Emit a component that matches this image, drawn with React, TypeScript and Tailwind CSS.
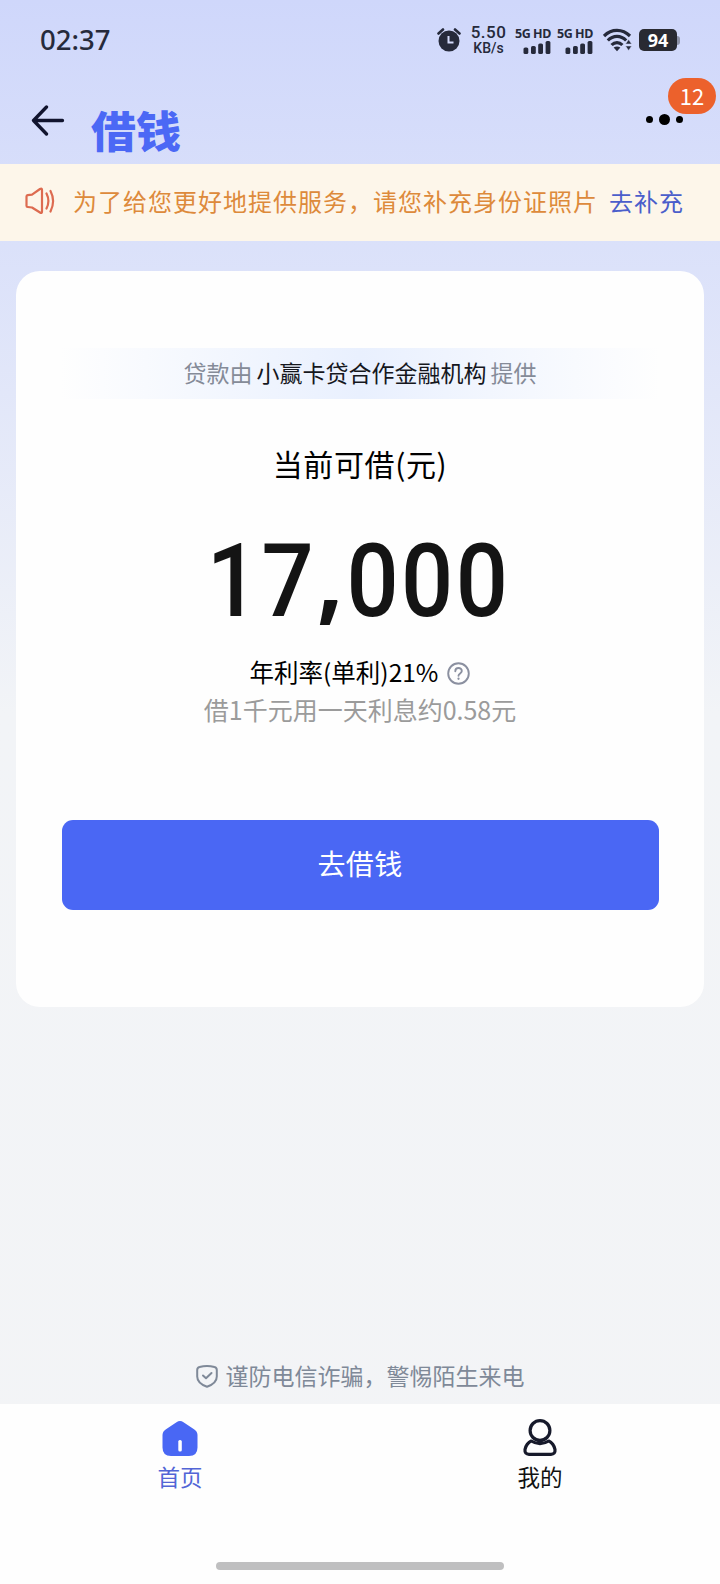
/**
 * Loan home screen
 * ─────────────────
 * Status bar, title bar, notice strip, quota card and bottom tabs.
 */
import type { ReactNode } from 'react';

const INK = '#262a3b';

function AlarmIcon() {
  return (
    <svg width="24" height="26" viewBox="0 0 24 26" fill="none">
      <circle cx="12" cy="14" r="10.5" fill={INK} />
      <path d="M1.5 6.5 6 2.5M22.5 6.5 18 2.5" stroke={INK} strokeWidth="2.6" strokeLinecap="round" />
      <path d="M11.5 9v6.5h5" stroke="#d3dafb" strokeWidth="2" />
    </svg>
  );
}

function Signal() {
  return (
    <div className="flex w-[36px] flex-col items-end">
      <div className="flex w-full justify-between text-[12.5px] leading-[13px] font-bold tracking-[-0.4px]">
        <span>5G</span>
        <span>HD</span>
      </div>
      <svg className="mt-px" width="28" height="13" viewBox="0 0 28 13" fill={INK}>
        <rect x="0.5" y="6.5" width="4.8" height="6.5" rx="1.6" />
        <rect x="8" y="5" width="4.8" height="8" rx="1.6" />
        <rect x="15.2" y="2.5" width="4.8" height="10.5" rx="1.6" />
        <rect x="22.6" y="0" width="4.8" height="13" rx="1.6" />
      </svg>
    </div>
  );
}

function WifiIcon() {
  return (
    <svg width="29" height="24" viewBox="0 0 29 24" fill="none">
      <g stroke={INK} strokeWidth="3.2">
        <path d="M1 8C8.5 .5 19.500 .5 27 8" />
        <path d="M4.800 12.500C10.200 7 17.800 7 23.200 12.500" />
        <path d="M8.600 17C11.800 13.700 16.200 13.700 19.400 17" />
      </g>
      <path d="M10.600 19.600Q14 17.400 17.400 19.600L14 23.200Z" fill={INK} />
      <path d="M25.600 11.500 28.700 16H22.500ZM25.600 22.500 22.500 18H28.700Z" fill={INK} stroke="#d3dafb" strokeWidth="0.5" />
    </svg>
  );
}

function StatusBar() {
  return (
    <div className="flex h-20 items-center justify-between pr-[40px] pl-[40px] text-[#262a3b]">
      <span className="font-['Noto_Sans'] text-[27.5px] leading-none font-medium">02:37</span>
      <div className="flex items-center">
        <AlarmIcon />
        <div className="ml-[9px] flex w-[37px] flex-col items-center gap-[2px] font-[Roboto] font-medium">
          <span className="text-[17px] leading-[14px] tracking-[0.5px]">5.50</span>
          <span className="text-[14px] leading-[14px]">KB/s</span>
        </div>
        <div className="ml-[8px] flex gap-[6px] font-['Noto_Sans']">
          <Signal />
          <Signal />
        </div>
        <span className="ml-[10px]">
          <WifiIcon />
        </span>
        <div className="ml-[7px] flex h-[22px] w-[38px] items-center justify-center rounded-[5px] bg-[#292a32] font-['Noto_Sans'] text-[18px] leading-none font-bold text-white">
          94
        </div>
        <span className="h-[9px] w-[3px] rounded-r-[3px] bg-[#8d92a8]" />
      </div>
    </div>
  );
}

function TitleBar() {
  return (
    <div className="flex h-[84px] items-start pr-[37px] pl-[31px]">
      <svg className="mt-[25px]" width="34" height="31" viewBox="0 0 34 31" fill="none" stroke="#11142e" strokeWidth="3.300" strokeLinecap="round" strokeLinejoin="round">
        <path d="M31.500 15.500H2.500M15.500 2 2.500 15.500 15.500 29" />
      </svg>
      <h1 className="mt-[27px] ml-[26px] scale-y-95 text-[45px] leading-[46px] font-black text-[#4b68f5]">借钱</h1>
      <div className="relative mt-[34px] ml-auto flex items-center gap-[6px]">
        <span className="size-[7px] rounded-full bg-black" />
        <span className="size-[11px] rounded-full bg-black" />
        <span className="size-[7px] rounded-full bg-black" />
        <span className="absolute -top-[36px] left-[22px] flex h-[36px] w-[48px] items-center justify-center rounded-full bg-[#ec612c] pb-[2px] text-[22px] leading-none text-white">
          12
        </span>
      </div>
    </div>
  );
}

function Notice() {
  return (
    <div className="flex h-[77px] items-center bg-[#fdf6ea] pb-[3px] pl-[24px] text-[24px] leading-none tracking-[1px]">
      <svg width="31" height="28" viewBox="0 0 31 28" fill="none" stroke="#dd6b50" strokeWidth="2.200" strokeLinecap="round" strokeLinejoin="round">
        <path d="M2.500 9.500Q2.500 8.300 3.700 8.100L8 7.600 16 2Q18 .900 18 3V24.500Q18 26.800 16 25.500L8 20.500 3.700 20Q2.500 19.900 2.500 18.700Z" />
        <path d="M22.500 6.500Q26.300 14 22.500 21.500M26.500 4Q31.700 14 26.500 24.500" />
      </svg>
      <span className="ml-[18px] text-[#dd8a3b]">为了给您更好地提供服务，请您补充身份证照片</span>
      <a className="ml-[11px] text-[#4b5ecb]">去补充</a>
    </div>
  );
}

function QuotaCard() {
  return (
    <section className="mx-4 mt-[30px] flex h-[736px] flex-col items-center rounded-[24px] bg-[#fefefe]">
      <div className="mt-[77px] flex h-[51px] w-[600px] items-center justify-center bg-linear-to-r from-[#fefefe] via-[#e9f0fe] to-[#fefefe] pb-[2px] text-[23px] leading-none text-[#858b98]">
        贷款由<span className="mx-[4px] text-[#15171d]">小赢卡贷合作金融机构</span>提供
      </div>
      <p className="mt-[48px] text-[30px] leading-[32px] tracking-[0.6px] text-black">当前可借(元)</p>
      <p className="mt-[47px] mr-[2px] scale-x-[0.9] font-[Roboto] text-[102px] leading-[102px] font-medium tracking-[2.700px] text-[#141414]">
        17<span className="relative -top-[4px] mx-px font-['Open_Sans'] leading-none font-bold">,</span>000
      </p>
      <div className="mt-[25px] flex h-[32px] items-center text-[24.500px] leading-none text-black">
        <span className="pb-[2px]">年利率(单利)21%</span>
        <svg className="ml-[9px]" width="23" height="23" viewBox="0 0 23 23" fill="none" stroke="#8b90a0" strokeWidth="1.900" strokeLinecap="round">
          <circle cx="11.500" cy="11.500" r="10.300" />
          <path d="M8.300 9.200C8.300 5 14.800 5 14.800 9.100C14.800 11.300 11.500 11.500 11.500 13.700" />
          <path d="M11.500 16.600V16.800" strokeWidth="2.200" />
        </svg>
      </div>
      <p className="mt-[4px] text-[25px] leading-[32px] text-[#9b9b9b]">借1千元用一天利息约0.58元</p>
      <button className="mt-[95px] h-[90px] w-[597px] rounded-[11px] bg-[#4a67f4] pb-[5px] text-[28px] leading-none tracking-[0.3px] text-white">去借钱</button>
    </section>
  );
}

function Tab({ label, color, children }: { label: string; color: string; children: ReactNode }) {
  return (
    <div className="flex flex-1 flex-col items-center pt-[14px]">
      {children}
      <span className={`mt-[5px] text-[22.500px] leading-[26px] ${color}`}>{label}</span>
    </div>
  );
}

export default function App() {
  return (
    <div className="flex h-[1584px] w-[720px] flex-col overflow-hidden bg-linear-to-b from-[#cfd7fb] via-[#f2f4f7] via-45% to-[#f3f4f6] font-['Noto_Sans_CJK_SC',sans-serif]">
      <StatusBar />
      <TitleBar />
      <Notice />
      <QuotaCard />

      {/* Fraud warning */}
      <div className="mt-auto mb-[15px] flex items-center justify-center text-[23px] leading-[24px] text-[#7f8998]">
        <svg className="mr-[8px]" width="22" height="24" viewBox="0 0 22 24" fill="none" stroke="#7f8998" strokeWidth="2" strokeLinecap="round" strokeLinejoin="round">
          <path d="M3.500 3Q11 .800 18.500 3Q20.800 3.600 20.800 6V12.500C20.800 17.500 16.500 20.800 11 22.800C5.500 20.800 1.200 17.500 1.200 12.500V6Q1.200 3.600 3.500 3Z" />
          <path d="M7 11.500 10 14.300 15.500 9" />
        </svg>
        <span className="pb-[2px]">谨防电信诈骗，警惕陌生来电</span>
      </div>

      {/* Bottom tabs */}
      <nav className="flex h-[180px] flex-col bg-[#fefefe]">
        <div className="flex">
          <Tab label="首页" color="text-[#5265d6]">
            <svg width="38" height="40" viewBox="0 0 38 40">
              <path d="M15.500 4.200Q19 1.800 22.500 4.200L33 11.200Q36.500 13.500 36.500 17V29.500Q36.500 38 28 38H10Q1.500 38 1.500 29.500V17Q1.500 13.500 5 11.200Z" fill="#4967f4" />
              <rect x="17.300" y="22" width="3.500" height="11.500" rx="1.600" fill="#fff" />
            </svg>
          </Tab>
          <Tab label="我的" color="text-[#111111]">
            <svg width="38" height="40" viewBox="0 0 38 40" fill="none" stroke="#171a2b" strokeWidth="3.200" strokeLinejoin="round">
              <circle cx="19" cy="12.500" r="9.900" />
              <path d="M10.200 23Q19 28.300 27.800 23C30.500 24 33.500 28 34 31.500Q34.500 36.300 30 36.300H8Q3.500 36.300 4 31.500C4.500 28 7.500 24 10.200 23Z" />
            </svg>
          </Tab>
        </div>
        <div className="mx-auto mt-auto mb-[14px] h-[8px] w-[288px] rounded-full bg-[#bfbfc0]" />
      </nav>
    </div>
  );
}
